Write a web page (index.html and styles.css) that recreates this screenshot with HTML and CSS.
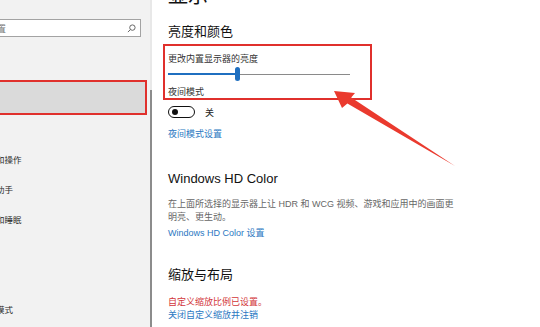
FILE: index.html
```html
<!DOCTYPE html>
<html lang="zh-CN">
  <head>
    <meta charset="UTF-8" />
    <meta name="viewport" content="width=device-width, initial-scale=1.0" />
    <title>设置 - 显示</title>
    <link rel="stylesheet" href="styles.css">
  </head>
  <body>
    <div class="window">
      <aside class="sidebar">
        <div class="sidebar-inner">
          <div class="search">
            <span class="search-text">查找设置</span>
            <svg class="search-icon" viewBox="0 0 10 10" aria-hidden="true">
              <circle cx="6" cy="4" r="3" />
              <path d="M3.9 6.1 L1 9" />
            </svg>
          </div>
          <ul class="nav">
            <li class="nav-item active">显示</li>
            <li class="nav-item">声音</li>
            <li class="nav-item">通知和操作</li>
            <li class="nav-item">专注助手</li>
            <li class="nav-item">电源和睡眠</li>
            <li class="nav-item">电池</li>
            <li class="nav-item">存储</li>
            <li class="nav-item">平板模式</li>
          </ul>
        </div>
        <div class="scrollbar"><div class="scroll-thumb"></div></div>
      </aside>

      <main class="content">
        <h1 class="page-title">显示</h1>

        <h2 class="section-title title-brightness">亮度和颜色</h2>
        <div class="highlight">
          <div class="label">更改内置显示器的亮度</div>
          <div class="slider">
            <span class="slider-fill"></span>
            <span class="slider-thumb"></span>
            <span class="slider-rest"></span>
          </div>
          <div class="label label-night">夜间模式</div>
        </div>
        <div class="toggle-row">
          <span class="toggle"><span class="knob"></span></span>
          <span class="toggle-text">关</span>
        </div>
        <a class="link link-night" href="#">夜间模式设置</a>

        <h2 class="section-title title-hd">Windows HD Color</h2>
        <p class="desc">在上面所选择的显示器上让 HDR 和 WCG 视频、游戏和应用中的画面更明亮、更生动。</p>
        <a class="link link-hd" href="#">Windows HD Color 设置</a>

        <h2 class="section-title title-scale">缩放与布局</h2>
        <div class="warn">自定义缩放比例已设置。</div>
        <a class="link" href="#">关闭自定义缩放并注销</a>
      </main>

      <svg class="arrow" viewBox="0 0 540 327" aria-hidden="true">
        <polygon points="334,91 355,93 351.2,97.6 455,166 347.4,103.5 342,108" />
      </svg>
    </div>
  </body>
</html>
```

FILE: styles.css
```css
body {
  margin: 0;
  font-family: 'Liberation Sans', 'Noto Sans CJK SC', sans-serif;
  background: #fff;
  color: #222;
  overflow: hidden;
}
.window {
  display: flex;
  width: 540px;
  height: 327px;
  position: relative;
  overflow: hidden;
}

/* left navigation */
.sidebar {
  display: flex;
  width: 152px;
  flex: 0 0 152px;
  background: #f2f2f2;
  overflow: hidden;
}
.sidebar-inner {
  width: 187px;
  flex: 0 0 187px;
  margin-left: -40px;
  padding-top: 19px;
}
.search {
  display: flex;
  align-items: center;
  justify-content: space-between;
  box-sizing: border-box;
  height: 18px;
  margin-right: 6px;
  padding: 0 4px 0 9px;
  background: #fff;
  border: 1px solid #a3a3a3;
}
.search-text {
  font-size: 9px;
  color: #777;
}
.search-icon {
  width: 9px;
  height: 9px;
  fill: none;
  stroke: #666;
  stroke-width: 1.1;
}
.nav {
  list-style: none;
  margin: 43px 0 0;
  padding: 0;
}
.nav-item {
  height: 30px;
  line-height: 30px;
  padding-left: 19px;
  font-size: 8.5px;
  color: #2a2a2a;
  white-space: nowrap;
}
.nav-item.active {
  box-sizing: border-box;
  height: 35px;
  line-height: 31px;
  padding-left: 15px;
  background: #dadada;
  border: 2px solid #e0302c;
}
.scrollbar {
  width: 2px;
  margin-left: 3px;
  padding-top: 90px;
  background: #e8e8e8;
}
.scroll-thumb {
  height: 100%;
  background: #8c8c8c;
}

/* main panel */
.content {
  flex: 1;
  padding-left: 16px;
}
.page-title {
  margin: -16px 0 0;
  font-size: 20px;
  line-height: 24px;
  font-weight: normal;
  color: #111;
}
.section-title {
  margin: 0;
  font-size: 13px;
  line-height: 17px;
  font-weight: normal;
  color: #111;
}
.title-brightness {
  margin-top: 15px;
}
.title-hd {
  margin-top: 29px;
}
.title-scale {
  margin-top: 26px;
}
.highlight {
  box-sizing: border-box;
  width: 209px;
  margin: 4px 0 0 -5px;
  padding: 7px 0 0 3px;
  border: 2px solid #e0302c;
}
.label {
  font-size: 9px;
  line-height: 13px;
  color: #333;
}
.label-night {
  margin-top: 5px;
  line-height: 12px;
}
.slider {
  display: flex;
  align-items: center;
  width: 182px;
  height: 14px;
  margin-top: 1px;
}
.slider-fill {
  width: 67px;
  height: 2px;
  background: #1f6fc0;
}
.slider-thumb {
  width: 5px;
  height: 14px;
  border-radius: 3px;
  background: #1f6fc0;
}
.slider-rest {
  flex: 1;
  height: 1px;
  background: #8a8a8a;
}
.toggle-row {
  display: flex;
  align-items: center;
  gap: 10px;
  height: 12px;
  margin-top: 6px;
}
.toggle {
  display: flex;
  align-items: center;
  box-sizing: border-box;
  width: 27px;
  height: 12px;
  padding-left: 3px;
  border: 1.5px solid #111;
  border-radius: 6px;
}
.knob {
  width: 6px;
  height: 6px;
  border-radius: 50%;
  background: #111;
}
.toggle-text {
  font-size: 9px;
  color: #222;
}
.link {
  display: block;
  font-size: 9px;
  line-height: 13px;
  color: #2b78c2;
  text-decoration: none;
}
.link-night {
  margin-top: 10px;
}
.link-hd {
  margin-top: 3px;
}
.desc {
  width: 290px;
  margin: 11px 0 0;
  font-size: 9px;
  line-height: 13px;
  color: #666;
}
.warn {
  margin-top: 13px;
  font-size: 9px;
  line-height: 13px;
  color: #d2363a;
}

/* annotation arrow */
.arrow {
  position: absolute;
  top: 0;
  left: 0;
  width: 540px;
  height: 327px;
  fill: #ea3a2e;
  pointer-events: none;
}
```
